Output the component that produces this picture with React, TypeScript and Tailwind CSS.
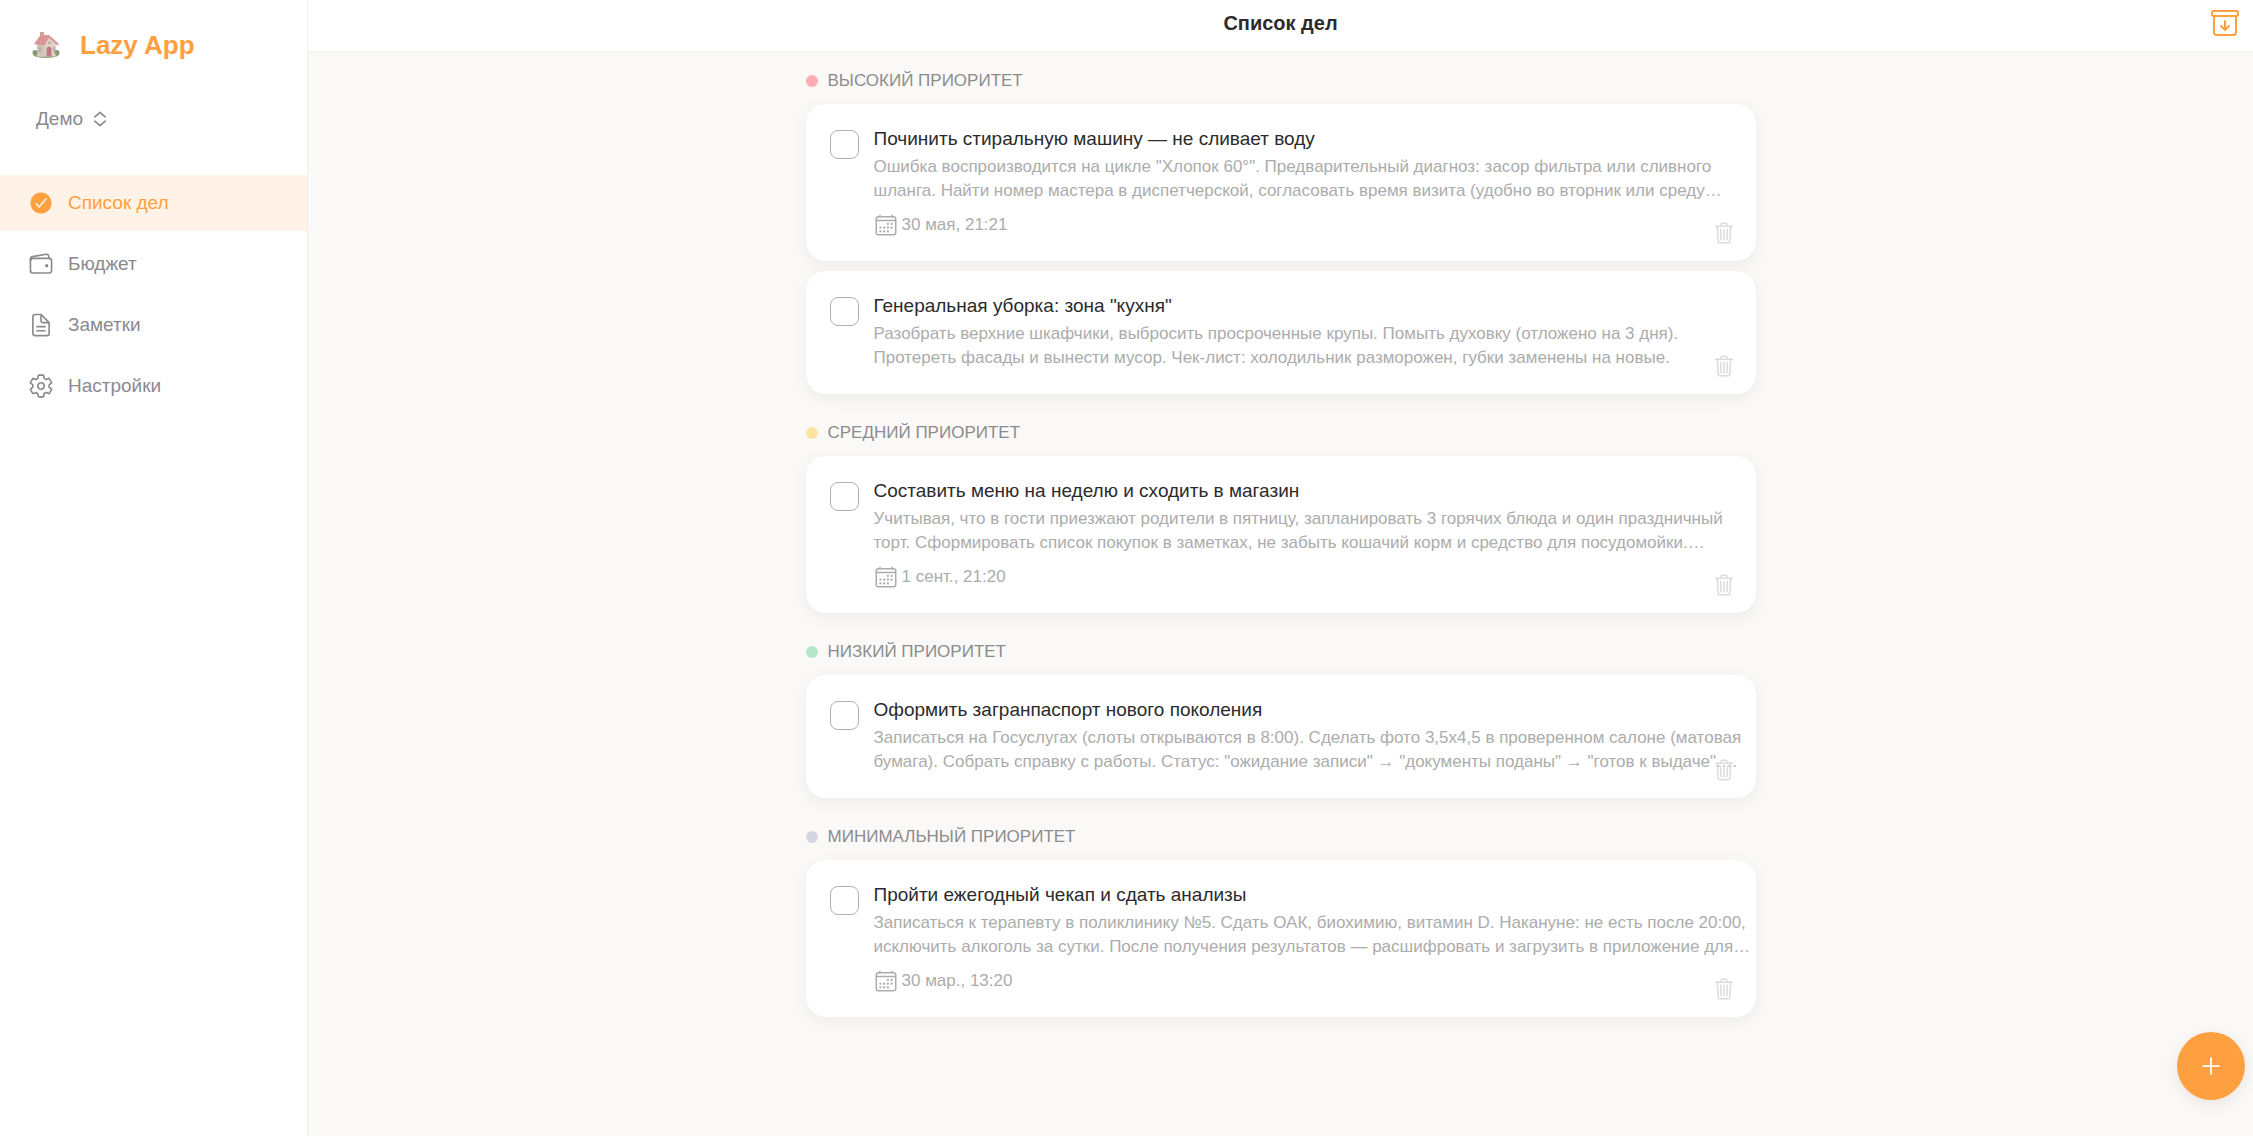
import React from "react";
import {
  IoAddOutline,
  IoArchiveOutline,
  IoCalendarOutline,
  IoCheckmarkCircle,
  IoDocumentTextOutline,
  IoSettingsOutline,
  IoTrashOutline,
  IoWalletOutline,
} from "react-icons/io5";

const navItems = [
  { label: "Список дел", icon: IoCheckmarkCircle, active: true },
  { label: "Бюджет", icon: IoWalletOutline, active: false },
  { label: "Заметки", icon: IoDocumentTextOutline, active: false },
  { label: "Настройки", icon: IoSettingsOutline, active: false },
];

const groups = [
  {
    title: "ВЫСОКИЙ ПРИОРИТЕТ",
    dot: "bg-[#ffadb3]",
    tasks: [
      {
        id: "washer",
        title: "Починить стиральную машину — не сливает воду",
        desc: 'Ошибка воспроизводится на цикле "Хлопок 60°". Предварительный диагноз: засор фильтра или сливного шланга. Найти номер мастера в диспетчерской, согласовать время визита (удобно во вторник или среду…',
        date: "30 мая, 21:21",
      },
      {
        id: "kitchen",
        title: 'Генеральная уборка: зона "кухня"',
        desc: "Разобрать верхние шкафчики, выбросить просроченные крупы. Помыть духовку (отложено на 3 дня). Протереть фасады и вынести мусор. Чек-лист: холодильник разморожен, губки заменены на новые.",
        date: "",
      },
    ],
  },
  {
    title: "СРЕДНИЙ ПРИОРИТЕТ",
    dot: "bg-[#fde3a0]",
    tasks: [
      {
        id: "menu",
        title: "Составить меню на неделю и сходить в магазин",
        desc: "Учитывая, что в гости приезжают родители в пятницу, запланировать 3 горячих блюда и один праздничный торт. Сформировать список покупок в заметках, не забыть кошачий корм и средство для посудомойки.…",
        date: "1 сент., 21:20",
      },
    ],
  },
  {
    title: "НИЗКИЙ ПРИОРИТЕТ",
    dot: "bg-[#b5e6cc]",
    tasks: [
      {
        id: "passport",
        title: "Оформить загранпаспорт нового поколения",
        desc: 'Записаться на Госуслугах (слоты открываются в 8:00). Сделать фото 3,5х4,5 в проверенном салоне (матовая бумага). Собрать справку с работы. Статус: "ожидание записи" → "документы поданы" → "готов к выдаче".…',
        date: "",
      },
    ],
  },
  {
    title: "МИНИМАЛЬНЫЙ ПРИОРИТЕТ",
    dot: "bg-[#d6d6e2]",
    tasks: [
      {
        id: "checkup",
        title: "Пройти ежегодный чекап и сдать анализы",
        desc: "Записаться к терапевту в поликлинику №5. Сдать ОАК, биохимию, витамин D. Накануне: не есть после 20:00, исключить алкоголь за сутки. После получения результатов — расшифровать и загрузить в приложение для…",
        date: "30 мар., 13:20",
      },
    ],
  },
];

function HouseLogo() {
  return (
    <svg className="h-7 w-7" viewBox="0 0 28 28" aria-hidden="true">
      <ellipse cx="14" cy="23.5" rx="13" ry="3.5" fill="#93a583" />
      <path d="M8 1h4v7H8z" fill="#d0a294" />
      <path d="M5 12 16 4l8 8v13.500H5z" fill="#ddd3c5" />
      <path d="M5 12v12l8 1.500V12z" fill="#d2c6b6" />
      <path d="M8.500 4H17l10 9-1.500 1.500L17 7l-5 7.500L2 13z" fill="#d99696" />
      <path d="M14.500 25.500V17q2.500-3 5 0v8.500z" fill="#c27a7e" />
      <path d="M6.500 16h3v5h-3zM21 16h2v4.500h-2zM16 10.500h2.500V13H16z" fill="#b9adb2" />
      <circle cx="3" cy="21.500" r="2.500" fill="#86996f" />
      <circle cx="25" cy="21.500" r="2.500" fill="#86996f" />
    </svg>
  );
}

function ExpandIcon() {
  return (
    <svg className="h-5.5 w-5.5" viewBox="0 0 512 512" fill="none" aria-hidden="true">
      <path
        d="M136 208l120-104 120 104M136 304l120 104 120-104"
        stroke="currentColor"
        strokeWidth="38"
        strokeLinecap="round"
        strokeLinejoin="round"
      />
    </svg>
  );
}

function Sidebar() {
  return (
    <aside className="flex w-77 shrink-0 flex-col border-r border-[#efeeec] bg-white">
      <div className="flex items-center gap-5 px-8 pt-[27px]">
        <HouseLogo />
        <span className="text-[26px] leading-9 font-bold text-[#ffa040]">Lazy App</span>
      </div>
      <button className="mt-10 ml-9 flex items-center gap-1.5 self-start text-[19px] leading-8 text-[#8a8a8e]">
        Демо
        <ExpandIcon />
      </button>
      <nav className="mt-10 flex flex-col gap-[5px]">
        {navItems.map((item) => (
          <a
            key={item.label}
            href="#"
            className={`flex h-14 items-center gap-3.5 pl-7 text-[19px] ${
              item.active ? "bg-[#fff2e6] text-[#ffa040]" : "text-[#8a8a8e]"
            }`}
          >
            <item.icon className="h-6.5 w-6.5" />
            {item.label}
          </a>
        ))}
      </nav>
    </aside>
  );
}

function TaskCard({ task }: { task: { id: string; title: string; desc: string; date: string } }) {
  return (
    <article className="relative flex gap-[15px] rounded-[20px] bg-white pt-5 pr-1 pb-6 pl-6 shadow-[0_4px_16px_rgba(0,0,0,0.06)]">
      <input
        type="checkbox"
        id={task.id}
        className="mt-1.5 h-[29px] w-[29px] shrink-0 appearance-none rounded-lg border border-[#b0b0b0] bg-white checked:bg-[#ffa040]"
      />
      <div className="min-w-0 flex-1 pt-px">
        <label htmlFor={task.id} className="block text-[19px] leading-7 text-[#2b2b2b]">
          {task.title}
        </label>
        <p className="mt-0.5 line-clamp-2 text-[17px] leading-6 text-[#acacac]">{task.desc}</p>
        {task.date && (
          <div className="mt-2.5 flex items-center gap-1 text-[17px] leading-6 text-[#acacac]">
            <IoCalendarOutline className="h-6 w-6" />
            <time>{task.date}</time>
          </div>
        )}
      </div>
      <button aria-label="Удалить" className="absolute right-5 bottom-4 text-[#dcdcdc]">
        <IoTrashOutline className="h-6 w-6" />
      </button>
    </article>
  );
}

export default function App() {
  return (
    <div className="flex min-h-screen bg-[#faf9f7] font-['Liberation_Sans',Arial,sans-serif]">
      <Sidebar />
      <div className="flex min-w-0 flex-1 flex-col">
        <header className="relative flex h-13 items-center justify-center border-b border-[#f1f0ee] bg-white pb-1.5">
          <h1 className="text-[20px] font-bold text-[#2b2b2b]">Список дел</h1>
          <button aria-label="Архив" className="absolute right-3 text-[#ffa040]">
            <IoArchiveOutline className="h-8 w-8" />
          </button>
        </header>

        <main className="mx-auto w-full max-w-[950px] pb-10">
          {groups.map((group) => (
            <section key={group.title} className="mb-2.5">
              <h2 className="flex h-13 items-center gap-2.5 pt-1.5 text-[17px] text-[#8c8c8c]">
                <span className={`h-3 w-3 rounded-full ${group.dot}`} />
                {group.title}
              </h2>
              <div className="flex flex-col gap-2.5">
                {group.tasks.map((task) => (
                  <TaskCard key={task.id} task={task} />
                ))}
              </div>
            </section>
          ))}
        </main>
      </div>

      <button
        aria-label="Добавить"
        className="fixed right-2 bottom-9 flex h-17 w-17 items-center justify-center rounded-full bg-[#ffa040] text-white shadow-[0_4px_16px_rgba(0,0,0,0.08)]"
      >
        <IoAddOutline className="h-7 w-7" />
      </button>
    </div>
  );
}
